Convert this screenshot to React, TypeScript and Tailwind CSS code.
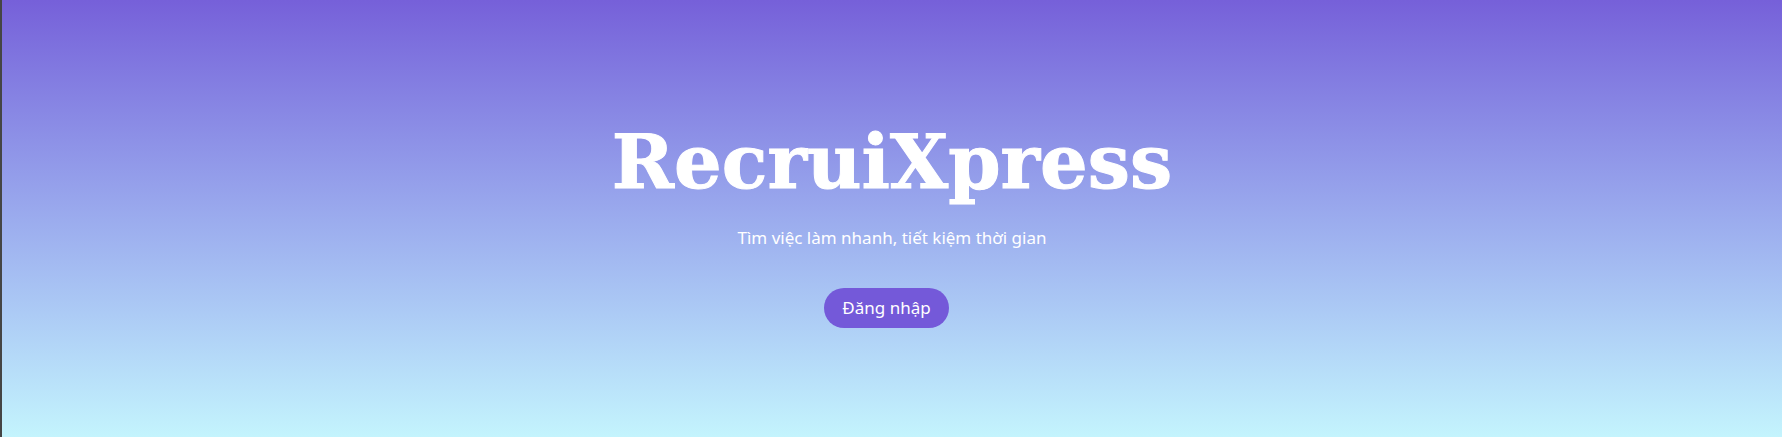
import React from "react";

export default function App() {
  return (
    <div className="flex h-[437px] w-full">
      <div className="w-[2px] bg-[#454545]" />
      <section className="flex flex-1 flex-col items-center justify-center bg-gradient-to-b from-[#7660d9] to-[#c4f4fd] pt-[16px]">
        <h1
          className="text-[75px] font-bold leading-none text-white [-webkit-text-stroke:1px_white]"
          style={{ fontFamily: '"DejaVu Serif", Georgia, serif' }}
        >
          RecruiXpress
        </h1>
        <p
          className="mt-[25px] text-[17px] text-white"
          style={{ fontFamily: '"Noto Sans", "Open Sans", sans-serif' }}
        >
          Tìm việc làm nhanh, tiết kiệm thời gian
        </p>
        <button
          className="mt-[37px] mr-[11px] h-[40px] w-[125px] rounded-full bg-[#7459d9] text-[17px] text-white"
          style={{ fontFamily: '"Noto Sans", "Open Sans", sans-serif' }}
        >
          Đăng nhập
        </button>
      </section>
    </div>
  );
}
